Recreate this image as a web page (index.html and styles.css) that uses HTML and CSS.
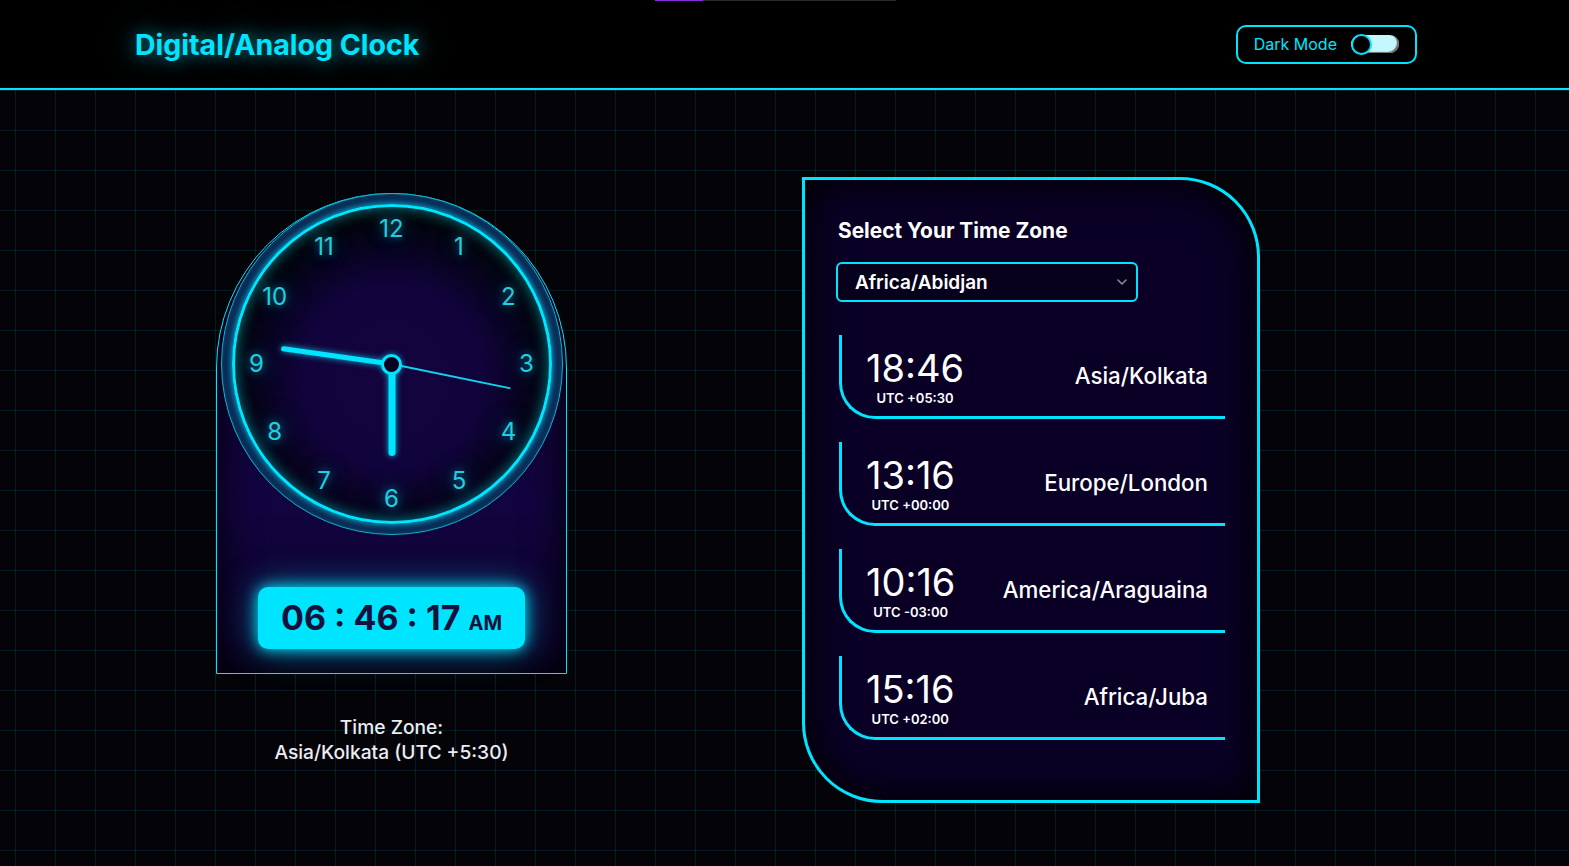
FILE: index.html
```html
<!DOCTYPE html>
<html lang="en">
<head>
<meta charset="utf-8">
<title>Digital/Analog Clock</title>
<link rel="stylesheet" href="styles.css">
</head>
<body>
<div class="loader"><span class="loader-fill"></span></div>
<header class="topbar">
  <h1 class="title">Digital/Analog Clock</h1>
  <label class="mode">
    <span class="mode-label">Dark Mode</span>
    <span class="switch"><span class="knob"></span></span>
  </label>
</header>
<main class="stage">
  <section class="clock-col">
    <div class="clock-box">
      <div class="dial">
        <div class="face">
          <span class="num" style="--a:0deg">12</span>
          <span class="num" style="--a:30deg">1</span>
          <span class="num" style="--a:60deg">2</span>
          <span class="num" style="--a:90deg">3</span>
          <span class="num" style="--a:120deg">4</span>
          <span class="num" style="--a:150deg">5</span>
          <span class="num" style="--a:180deg">6</span>
          <span class="num" style="--a:210deg">7</span>
          <span class="num" style="--a:240deg">8</span>
          <span class="num" style="--a:270deg">9</span>
          <span class="num" style="--a:300deg">10</span>
          <span class="num" style="--a:330deg">11</span>
          <span class="hand hand-hour" style="--a:180deg"></span>
          <span class="hand hand-min" style="--a:278deg"></span>
          <span class="hand hand-sec" style="--a:101.6deg"></span>
          <span class="pivot"></span>
        </div>
      </div>
      <div class="digital">06 : 46 : 17 <span class="ampm">AM</span></div>
    </div>
    <p class="tz-label">Time Zone:<br>Asia/Kolkata (UTC +5:30)</p>
  </section>

  <section class="panel">
    <h2 class="panel-title">Select Your Time Zone</h2>
    <div class="select-wrap">
      <select class="tz-select">
        <option>Africa/Abidjan</option>
      </select>
      <svg class="chev" width="10" height="6" viewBox="0 0 10 6"><path d="M1 1 L5 5 L9 1" fill="none" stroke="#8a8a9a" stroke-width="1.6" stroke-linecap="round" stroke-linejoin="round"/></svg>
    </div>
    <div class="zones">
      <div class="zone">
        <div class="zone-time"><span class="hm">18:46</span><span class="utc">UTC +05:30</span></div>
        <span class="city">Asia/Kolkata</span>
      </div>
      <div class="zone">
        <div class="zone-time"><span class="hm">13:16</span><span class="utc">UTC +00:00</span></div>
        <span class="city">Europe/London</span>
      </div>
      <div class="zone">
        <div class="zone-time"><span class="hm">10:16</span><span class="utc">UTC -03:00</span></div>
        <span class="city">America/Araguaina</span>
      </div>
      <div class="zone">
        <div class="zone-time"><span class="hm">15:16</span><span class="utc">UTC +02:00</span></div>
        <span class="city">Africa/Juba</span>
      </div>
    </div>
  </section>
</main>
</body>
</html>
```

FILE: styles.css
```css
* { box-sizing: border-box; }

html, body { height: 100%; }

body {
  margin: 0;
  background: #030308;
  color: #fff;
  font-family: Inter, "Noto Sans", "Liberation Sans", sans-serif;
}

.loader {
  position: absolute;
  top: 0;
  left: 655px;
  width: 241px;
  height: 1px;
  background: #2a2a2a;
}
.loader-fill {
  display: block;
  width: 48px;
  height: 100%;
  background: #8a2be2;
}

/* header */
.topbar {
  height: 90px;
  background: #000;
  border-bottom: 2px solid #00e5ff;
  display: flex;
  align-items: center;
  justify-content: space-between;
  padding: 0 152px 0 135px;
}
.title {
  margin: 0;
  font-size: 28.5px;
  font-weight: 700;
  color: #00e5ff;
  text-shadow: 0 0 18px rgba(0, 229, 255, 0.6), 0 0 40px rgba(0, 229, 255, 0.35);
}
.mode {
  display: flex;
  align-items: center;
  gap: 14px;
  height: 39px;
  padding: 0 16px;
  border: 2px solid #00e5ff;
  border-radius: 10px;
  color: #00e5ff;
  font-size: 16px;
}
.switch {
  position: relative;
  width: 48px;
  height: 18px;
  border-radius: 9px;
  background: #c4f7ff;
  box-shadow: inset -2px -1px 1px #6a6a6a;
}
.knob {
  position: absolute;
  left: 0;
  top: 50%;
  width: 21px;
  height: 21px;
  margin-top: -10.5px;
  border: 2px solid #00e5ff;
  border-radius: 50%;
  background: #000;
}

/* stage */
.stage {
  display: flex;
  align-items: flex-start;
  gap: 235px;
  padding: 87px 0 0 216px;
  min-height: calc(100vh - 90px);
  background-color: #030308;
  background-image:
    linear-gradient(transparent 39px, rgba(0, 229, 255, 0.11) 39px, rgba(0, 229, 255, 0.11) 40px),
    linear-gradient(90deg, transparent 39px, rgba(0, 229, 255, 0.11) 39px, rgba(0, 229, 255, 0.11) 40px);
  background-size: 40px 40px;
  background-position: 16px 1px;
}

/* clock column */
.clock-col {
  width: 351px;
  margin-top: 16px;
}
.clock-box {
  width: 351px;
  height: 481px;
  border: 1px solid #00e5ff;
  border-radius: 175px 175px 0 0;
  background: linear-gradient(#0d0232 0%, #120440 65%, #0b0226 100%);
  box-shadow: inset 0 0 40px rgba(0, 0, 0, 0.95);
  display: flex;
  flex-direction: column;
  align-items: center;
}
.dial {
  width: 342px;
  height: 342px;
  margin-top: -1px;
  padding: 10px;
  border: 1px solid #0fb8cc;
  border-radius: 50%;
  background: radial-gradient(circle, #0c1542 85%, #070b2a 100%);
  box-shadow: inset 0 0 6px rgba(0, 229, 255, 0.35);
}
.face {
  position: relative;
  width: 320px;
  height: 320px;
  border: 3px solid #00e5ff;
  border-radius: 50%;
  background: radial-gradient(circle at 50% 54%, #13043e 0%, #11033b 40%, #08031f 56%, #010508 70%, #02090c 100%);
  box-shadow: 0 0 10px #00e5ff, inset 0 0 14px rgba(0, 229, 255, 0.55);
}
.num {
  position: absolute;
  left: 50%;
  top: 50%;
  width: 40px;
  height: 30px;
  margin: -15px 0 0 -20px;
  text-align: center;
  line-height: 30px;
  font-size: 24px;
  font-weight: 400;
  color: #1fcfe2;
  text-shadow: 0 0 10px rgba(0, 229, 255, 0.55), 0 0 24px rgba(0, 229, 255, 0.4), 0 0 40px rgba(0, 229, 255, 0.25);
  transform: rotate(var(--a)) translateY(-135px) rotate(calc(-1 * var(--a)));
}
.hand {
  position: absolute;
  left: 50%;
  bottom: 50%;
  transform-origin: 50% 100%;
  transform: translateX(-50%) rotate(var(--a));
  background: #00e5ff;
  box-shadow: 0 0 6px rgba(0, 229, 255, 0.8);
}
.hand-hour {
  width: 7px;
  height: 92px;
  border-radius: 4px;
}
.hand-min {
  width: 5px;
  height: 112px;
  border-radius: 3px;
}
.hand-sec {
  width: 2px;
  height: 121px;
  border-radius: 1px;
  background: #10d4ec;
  box-shadow: none;
}
.pivot {
  position: absolute;
  left: 50%;
  top: 50%;
  width: 21px;
  height: 21px;
  margin: -10px 0 0 -10.5px;
  border: 3px solid #00e5ff;
  border-radius: 50%;
  background: #0a0122;
  box-shadow: 0 0 6px rgba(0, 229, 255, 0.6);
}
.digital {
  margin-top: 52px;
  width: 267px;
  height: 62px;
  border-radius: 10px;
  background: #00e5ff;
  color: #15113c;
  font-weight: 700;
  font-size: 34px;
  line-height: 62px;
  text-align: center;
  box-shadow: 0 0 14px #00e5ff, 0 0 34px rgba(0, 229, 255, 0.55);
}
.ampm {
  font-size: 20px;
}
.tz-label {
  margin: 41px 0 0;
  text-align: center;
  font-size: 19.2px;
  font-weight: 500;
  line-height: 25px;
  color: #ececf4;
}

/* panel */
.panel {
  width: 458px;
  height: 626px;
  border: 3px solid #00e5ff;
  border-radius: 0 80px 0 80px;
  background: #0a0026;
  box-shadow: inset 0 0 40px 4px #000;
  padding: 38px 0 0 33px;
}
.panel-title {
  margin: 0;
  font-size: 20.9px;
  font-weight: 700;
  line-height: 26px;
}
.select-wrap {
  position: relative;
  width: 302px;
  height: 40px;
  margin: 18px 0 0 -2px;
}
.tz-select {
  appearance: none;
  -webkit-appearance: none;
  width: 100%;
  height: 100%;
  padding: 0 0 0 17px;
  border: 2px solid #00e5ff;
  border-radius: 6px;
  background: #07011c;
  color: #fff;
  font-family: inherit;
  font-size: 19px;
  font-weight: 600;
  outline: none;
}
.chev {
  position: absolute;
  right: 11px;
  top: 17px;
}
.zones {
  display: flex;
  flex-direction: column;
  gap: 23px;
  margin: 33px 0 0 1px;
  width: 386px;
}
.zone {
  height: 84px;
  border-left: 3px solid #00e5ff;
  border-bottom: 3px solid #00e5ff;
  border-bottom-left-radius: 36px;
  display: flex;
  align-items: center;
  justify-content: space-between;
  padding: 0 17px 0 24px;
}
.zone-time {
  display: flex;
  flex-direction: column;
  align-items: center;
}
.hm {
  font-size: 38px;
  font-weight: 400;
  line-height: 46px;
}
.utc {
  margin-top: -1px;
  font-size: 13px;
  font-weight: 600;
  line-height: 16px;
}
.city {
  font-size: 22.3px;
  font-weight: 500;
}
```
